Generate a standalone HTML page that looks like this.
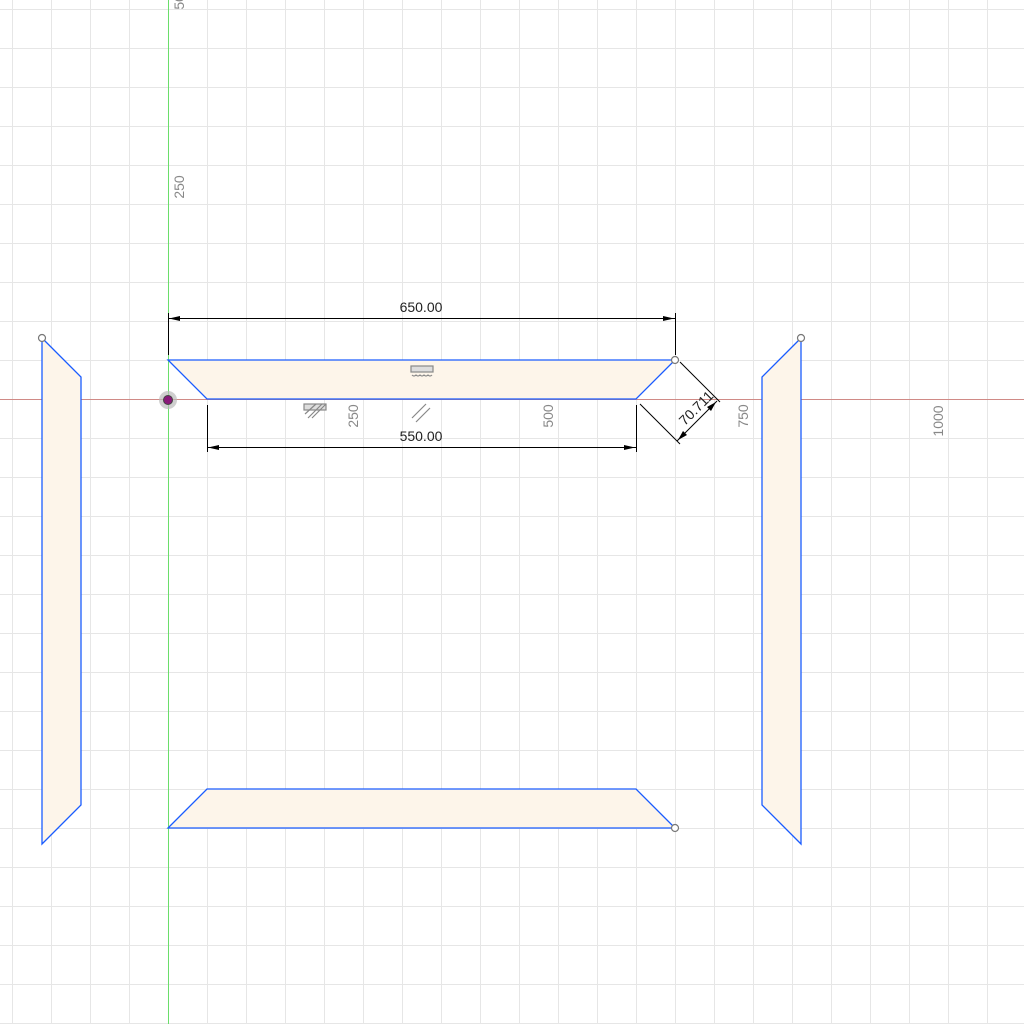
<!DOCTYPE html>
<html><head><meta charset="utf-8"><style>html,body{margin:0;padding:0;background:#fff}svg{display:block}text{font-family:"Liberation Sans",sans-serif}</style></head><body>
<svg width="1024" height="1024" viewBox="0 0 1024 1024" xmlns="http://www.w3.org/2000/svg">
<defs>
<pattern id="g" patternUnits="userSpaceOnUse" x="168" y="399" width="39" height="39">
<path d="M0.5 0V39M0 0.5H39" stroke="#e6e6e6" stroke-width="1" fill="none"/>
</pattern>
</defs>
<rect width="1024" height="1024" fill="#fff"/>
<rect width="1024" height="1024" fill="url(#g)"/>
<line x1="0" y1="399.5" x2="1024" y2="399.5" stroke="#d08a86" stroke-width="1"/>
<line x1="168.5" y1="0" x2="168.5" y2="1024" stroke="#6ade6a" stroke-width="1"/>
<g fill="#fdf5ea" stroke="#1a5cff" stroke-width="1.3">
<polygon points="168,360 675,360 636,399 207,399"/>
<polygon points="168,828 675,828 636,789 207,789"/>
<polygon points="42,338 81,377 81,805 42,844"/>
<polygon points="801,338 762,377 762,805 801,844"/>
</g>
<g fill="#fff" stroke="#777" stroke-width="1.2">
<circle cx="42" cy="338" r="3.5"/><circle cx="801" cy="338" r="3.5"/>
<circle cx="675" cy="360" r="3.5"/><circle cx="675" cy="828" r="3.5"/>
</g>
<circle cx="168" cy="400" r="9" fill="#bbb" opacity="0.7"/>
<circle cx="168" cy="400" r="4.5" fill="#8a1a7a" stroke="#444" stroke-width="1"/>
<g stroke="#000" stroke-width="1" fill="none">
<path d="M168.5 313V355M675.5 313V355M168 318.5H675"/>
<path d="M207.5 405V452M636.5 405V452M207 447.5H636"/>
<path d="M640 404L680 444M680 362L720 402M677 441L717 401"/>
</g>
<g fill="#000">
<polygon points="169,318.5 180,316 180,321"/><polygon points="674,318.5 663,316 663,321"/>
<polygon points="208,447.5 219,445 219,450"/><polygon points="635,447.5 624,445 624,450"/>
<polygon points="678,440 683,431 687,435"/><polygon points="716,402 707,407 711,411"/>
</g>
<g font-size="14" fill="#222" text-anchor="middle">
<text x="421" y="312">650.00</text>
<text x="421" y="441">550.00</text>
<text transform="translate(696,408) rotate(-45)" x="0" y="5">70.711</text>
</g>
<g font-size="14" fill="#888" text-anchor="middle">
<text transform="translate(358,416) rotate(-90)" x="0" y="0">250</text>
<text transform="translate(553,416) rotate(-90)" x="0" y="0">500</text>
<text transform="translate(748,416) rotate(-90)" x="0" y="0">750</text>
<text transform="translate(943,421) rotate(-90)" x="0" y="0">1000</text>
<text transform="translate(184,187) rotate(-90)" x="0" y="0">250</text>
<text transform="translate(184,-2) rotate(-90)" x="0" y="0">500</text>
</g>
<g stroke="#888" stroke-width="1.2" fill="none">
<rect x="411" y="366" width="22" height="6" fill="#ddd"/>
<path d="M412 375q2 2 4 0q2 2 4 0q2 2 4 0q2 2 4 0q2 2 4 0"/>
<rect x="304" y="404" width="22" height="6" fill="#ddd"/>
<path d="M308 418L322 404M312 418L326 404M305 414L316 404"/>
<path d="M412 418L426 404M416 422L430 408"/>
</g>
</svg>
</body></html>
